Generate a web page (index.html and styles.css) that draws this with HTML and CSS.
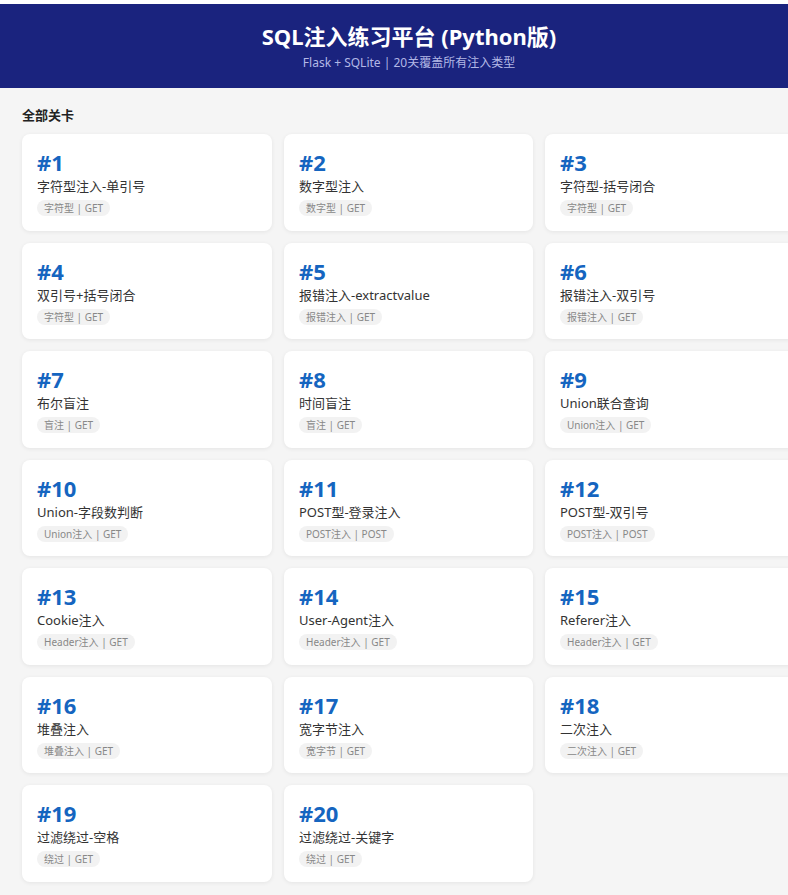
FILE: index.html
```html
<!DOCTYPE html>
<html>
<head lang="zh">
    <meta charset="UTF-8">
    <title>SQL注入练习平台</title>
    <link rel="stylesheet" href="styles.css">
</head>
<body>
<div class="page">
    <div class="header">
        <h1>SQL注入练习平台 (Python版)</h1>
        <p>Flask + SQLite | 20关覆盖所有注入类型</p>
    </div>
    <div class="container">
        <h2 class="section_title">全部关卡</h2>
        <div class="level_grid">
            <div class="card"><div class="num">#1</div><div class="name">字符型注入-单引号</div><span class="tag">字符型 | GET</span></div>
            <div class="card"><div class="num">#2</div><div class="name">数字型注入</div><span class="tag">数字型 | GET</span></div>
            <div class="card"><div class="num">#3</div><div class="name">字符型-括号闭合</div><span class="tag">字符型 | GET</span></div>
            <div class="card"><div class="num">#4</div><div class="name">双引号+括号闭合</div><span class="tag">字符型 | GET</span></div>
            <div class="card"><div class="num">#5</div><div class="name">报错注入-extractvalue</div><span class="tag">报错注入 | GET</span></div>
            <div class="card"><div class="num">#6</div><div class="name">报错注入-双引号</div><span class="tag">报错注入 | GET</span></div>
            <div class="card"><div class="num">#7</div><div class="name">布尔盲注</div><span class="tag">盲注 | GET</span></div>
            <div class="card"><div class="num">#8</div><div class="name">时间盲注</div><span class="tag">盲注 | GET</span></div>
            <div class="card"><div class="num">#9</div><div class="name">Union联合查询</div><span class="tag">Union注入 | GET</span></div>
            <div class="card"><div class="num">#10</div><div class="name">Union-字段数判断</div><span class="tag">Union注入 | GET</span></div>
            <div class="card"><div class="num">#11</div><div class="name">POST型-登录注入</div><span class="tag">POST注入 | POST</span></div>
            <div class="card"><div class="num">#12</div><div class="name">POST型-双引号</div><span class="tag">POST注入 | POST</span></div>
            <div class="card"><div class="num">#13</div><div class="name">Cookie注入</div><span class="tag">Header注入 | GET</span></div>
            <div class="card"><div class="num">#14</div><div class="name">User-Agent注入</div><span class="tag">Header注入 | GET</span></div>
            <div class="card"><div class="num">#15</div><div class="name">Referer注入</div><span class="tag">Header注入 | GET</span></div>
            <div class="card"><div class="num">#16</div><div class="name">堆叠注入</div><span class="tag">堆叠注入 | GET</span></div>
            <div class="card"><div class="num">#17</div><div class="name">宽字节注入</div><span class="tag">宽字节 | GET</span></div>
            <div class="card"><div class="num">#18</div><div class="name">二次注入</div><span class="tag">二次注入 | GET</span></div>
            <div class="card"><div class="num">#19</div><div class="name">过滤绕过-空格</div><span class="tag">绕过 | GET</span></div>
            <div class="card"><div class="num">#20</div><div class="name">过滤绕过-关键字</div><span class="tag">绕过 | GET</span></div>
        </div>
    </div>
</div>
</body>
</html>
```

FILE: styles.css
```css
html, body {
    margin: 0;
    padding: 0;
}
html {
    background: #fff;
}
body {
    font-family: "Noto Sans", "Noto Sans CJK SC", sans-serif;
    color: #333;
    overflow-x: hidden;
    padding-top: 4px;
}
.page {
    width: 818px;
    background: #f5f5f5;
}
.header {
    background: #1a237e;
    color: #fff;
    text-align: center;
    padding: 18px 0 16px;
}
.header h1 {
    margin: 0;
    font-size: 22px;
    line-height: 28px;
    font-weight: bold;
}
.header p {
    margin: 4px 0 0;
    font-size: 12px;
    line-height: 18px;
    color: #b3b8e6;
}
.container {
    padding: 18px 22px 20px;
}
.section_title {
    margin: 0 0 10px;
    font-size: 13px;
    line-height: 18px;
    font-weight: bold;
    color: #222;
}
.level_grid {
    display: grid;
    grid-template-columns: 250px 249px 250px;
    column-gap: 12px;
    row-gap: 12px;
}
.card {
    background: #fff;
    border-radius: 8px;
    box-shadow: 0 1px 4px rgba(0, 0, 0, 0.07);
    padding: 15px 15px 13px;
    height: 68.5px;
}
.card .num {
    font-size: 22px;
    line-height: 26px;
    font-weight: bold;
    color: #1565c0;
}
.card .name {
    margin-top: 2px;
    font-size: 13px;
    line-height: 18px;
    color: #333;
}
.card .tag {
    display: inline-block;
    margin-top: -2px;
    background: #f2f2f2;
    color: #888;
    font-size: 10px;
    line-height: 16px;
    padding: 0 7px;
    border-radius: 8px;
}
```
